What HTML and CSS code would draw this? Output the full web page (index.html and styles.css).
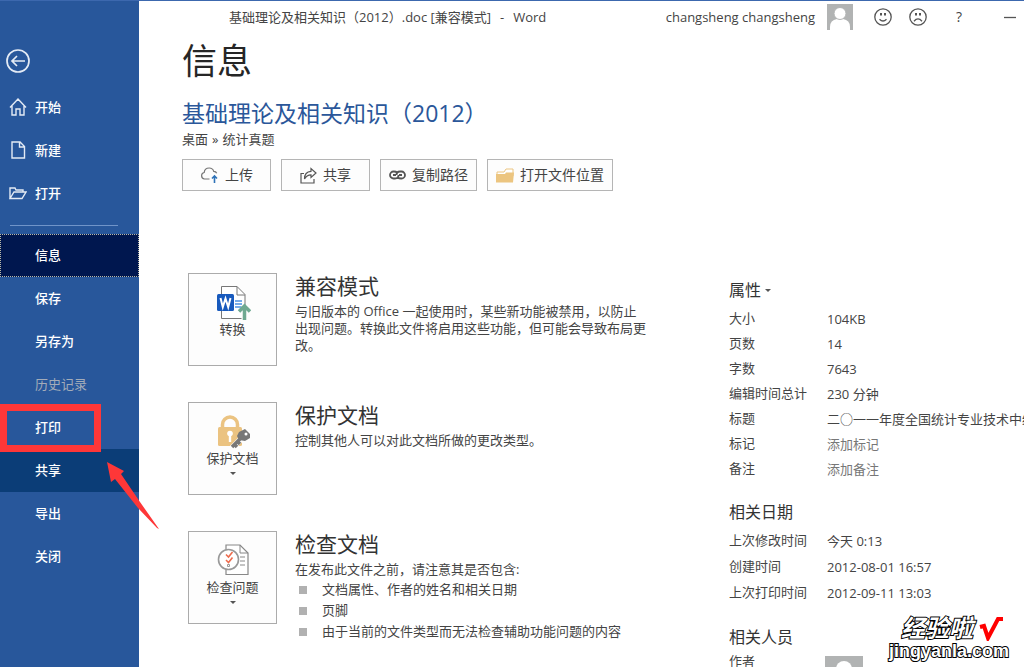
FILE: index.html
```html
<!DOCTYPE html>
<html lang="zh-CN">
<head>
<meta charset="utf-8">
<title>基础理论及相关知识（2012）.doc - Word</title>
<link rel="stylesheet" href="styles.css">
</head>
<body>
<div class="app">
  <aside class="sidebar">
    <button class="back" aria-label="返回">
      <svg width="24" height="24" viewBox="0 0 24 24"><circle cx="12" cy="12" r="11"/><path d="M19 12H6M11 7l-5 5 5 5"/></svg>
    </button>
    <nav class="nav">
      <a class="nav-item" href="#"><svg class="nav-icon" width="18" height="18" viewBox="0 0 18 18"><path d="M1 9.500 9 1l8 8.500M3 8v9h4v-6h4v6h4V8"/></svg>开始</a>
      <a class="nav-item" href="#"><svg class="nav-icon" width="18" height="18" viewBox="0 0 18 18"><path d="M3 1h8l4.500 4.500V17H3zM10.500 1v5H15.500"/></svg>新建</a>
      <a class="nav-item" href="#"><svg class="nav-icon" width="18" height="18" viewBox="0 0 18 18"><path d="M1 14.500V4h5l1 2h7v2M1 14.500 5 8h12l-4 6.500z"/></svg>打开</a>
      <hr class="divider">
      <a class="nav-item text-only current" href="#">信息</a>
      <a class="nav-item text-only" href="#">保存</a>
      <a class="nav-item text-only" href="#">另存为</a>
      <a class="nav-item text-only disabled" href="#" aria-disabled="true">历史记录</a>
      <a class="nav-item text-only marked" href="#">打印</a>
      <a class="nav-item text-only hover" href="#">共享</a>
      <a class="nav-item text-only" href="#">导出</a>
      <a class="nav-item text-only" href="#">关闭</a>
    </nav>
  </aside>

  <main class="main">
    <header class="titlebar">
      <div class="doc-name"><span>基础理论及相关知识（2012）.doc [兼容模式]</span><span>-</span><span>Word</span></div>
      <span class="user">changsheng changsheng</span>
      <svg class="avatar" width="26" height="26" viewBox="0 0 26 26"><path fill="#b1b3b3" d="M0 0h26v26H0z"/><path fill="#fff" d="M3 26v-3q0-7 7-8h6q7 1 7 8v3z"/><circle cx="13" cy="9.500" r="6" fill="#fff" stroke="#b1b3b3"/></svg>
      <button class="tool" aria-label="微笑"><svg width="18" height="18" viewBox="0 0 18 18"><circle cx="9" cy="9" r="8.200"/><path d="M5.500 11.200q3.500 3.600 7 0"/><path class="eyes" d="M7 5v2.500M11 5v2.500"/></svg></button>
      <button class="tool" aria-label="哭脸"><svg width="18" height="18" viewBox="0 0 18 18"><circle cx="9" cy="9" r="8.200"/><path d="M5 13.200q4-4.500 8 0"/><path class="eyes" d="M7 5v2.500M11 5v2.500"/></svg></button>
      <button class="tool help" aria-label="帮助">?</button>
      <button class="tool minimize" aria-label="最小化"><svg width="12" height="18" viewBox="0 0 12 18"><path d="M0 9.500h12"/></svg></button>
    </header>

    <h1 class="page-title">信息</h1>
    <h2 class="doc-title">基础理论及相关知识（2012）</h2>
    <p class="path"><span>桌面</span><span>»</span><span>统计真题</span></p>

    <div class="actions">
      <button class="action"><svg width="19" height="16" viewBox="0 0 19 16"><path fill="none" stroke="#777" stroke-width="1.200" d="M9.500 12H4.500a3.300 3.300 0 0 1-.3-6.500C4.500 2.500 7 1 9.200 1c2.300 0 3.900 1.300 4.500 3.300 1.500 0 2.600.8 3 2"/><path fill="none" stroke="#2f73b8" stroke-width="1.600" d="M14.500 16V9M12 11.500 14.500 9l2.500 2.500"/></svg>上传</button>
      <button class="action"><svg width="17" height="17" viewBox="0 0 17 17"><path fill="none" stroke="#555" stroke-width="1.200" d="M4 6.500H1V16h13v-4M4.500 12c0-4.500 2-7.500 6.500-7.700V1.500L16 6l-5 4.500V7.800c-3 0-5 1.200-6.500 4.200z"/></svg>共享</button>
      <button class="action"><svg width="17" height="10" viewBox="0 0 17 10"><path fill="none" stroke="#555" stroke-width="1.800" d="M8 2.500Q7 1.500 5 1.500H4.500a3.500 3.500 0 0 0 0 7H6c2 0 3.500-1.500 3.500-3.500M9 7.500q1 1 3 1h.5a3.500 3.500 0 0 0 0-7H11C9 1.500 7.500 3 7.500 5M4 5h3M10 5h3"/></svg>复制路径</button>
      <button class="action"><svg width="18" height="15" viewBox="0 0 18 15"><path fill="#fff" stroke="#ecc580" d="M1 13V4h7l2-3h7v7"/><path fill="#ecc580" d="M0 14.500V6h9l1-1.500h8l-1 10z"/></svg>打开文件位置</button>
    </div>

    <div class="content">
      <div class="tasks">
        <section class="task">
          <button class="card">
            <svg width="36" height="34" viewBox="0 0 36 34"><path fill="#fff" stroke="#777" d="M6.500.5H22l8 8V32.500H6.500z"/><path fill="none" stroke="#777" d="M22 .5V9h8"/><path stroke="#4b91e2" stroke-width="1.300" d="M20 15h7M20 18h7M20 21h7"/><rect x="2" y="8" width="17" height="17" rx="1.500" fill="#185abd"/><path fill="none" stroke="#fff" stroke-width="2" d="m5.500 12 2.300 9 2.700-8.500 2.700 8.500 2.300-9"/><path fill="none" stroke="#fdfdfd" stroke-width="6" d="M29.500 34V20"/><path fill="none" stroke="#6fa991" stroke-width="3.500" d="M29.500 34V21M24 25.500l5.500-5.500 5.500 5.500"/></svg>
            <span>转换</span>
          </button>
          <div class="task-body">
            <h3>兼容模式</h3>
            <p>与旧版本的 Office 一起使用时，某些新功能被禁用，以防止出现问题。转换此文件将启用这些功能，但可能会导致布局更改。</p>
          </div>
        </section>
        <section class="task">
          <button class="card">
            <svg width="36" height="34" viewBox="0 0 36 34"><path fill="none" stroke="#ebc381" stroke-width="3.500" d="M7.500 14V9.500a7.500 7.500 0 0 1 15 0V14"/><rect x="3" y="12" width="24" height="19" rx="1.500" fill="#ebc381"/><circle cx="15" cy="18.500" r="2.800" fill="#fff"/><path fill="#fff" d="M13.800 19h2.400v8h-2.400z"/><path fill="none" stroke="#fdfdfd" stroke-width="6" d="M17 33 27 23"/><path fill="none" stroke="#777" stroke-width="3.500" d="M17 32 27 22M19 29l3 3M22 26l3 3"/><path fill="#777" d="m24 17 6-3 5 5v4l-5 3-6-1-2-4z"/><circle cx="31" cy="19" r="1.500" fill="#fff"/></svg>
            <span>保护文档</span>
            <svg class="caret" width="6" height="3" viewBox="0 0 6 3"><path d="M0 0h6L3 3z"/></svg>
          </button>
          <div class="task-body">
            <h3>保护文档</h3>
            <p>控制其他人可以对此文档所做的更改类型。</p>
          </div>
        </section>
        <section class="task">
          <button class="card">
            <svg width="36" height="34" viewBox="0 0 36 34"><path fill="#fff" stroke="#888" stroke-width="1.200" d="M11 1h14l8 8v21.500H11z"/><path fill="none" stroke="#888" d="M25 1v8h8M25 13h5M25 17h5M25 21h5"/><circle cx="13.500" cy="15.500" r="10" fill="#fff" stroke="#999" stroke-width="1.600"/><path fill="none" stroke="#ed6c4d" stroke-width="1.600" d="m11 10.500 2.500 2.500 4-5M11 16l2.500 2.500 4-5"/><path fill="none" stroke="#999" d="M12.500 20.500h2v2h-2z"/></svg>
            <span>检查问题</span>
            <svg class="caret" width="6" height="3" viewBox="0 0 6 3"><path d="M0 0h6L3 3z"/></svg>
          </button>
          <div class="task-body">
            <h3>检查文档</h3>
            <p>在发布此文件之前，请注意其是否包含:</p>
            <ul>
              <li>文档属性、作者的姓名和相关日期</li>
              <li>页脚</li>
              <li>由于当前的文件类型而无法检查辅助功能问题的内容</li>
            </ul>
          </div>
        </section>
      </div>

      <div class="details">
        <h4><button class="props-menu">属性<svg class="caret" width="6" height="3" viewBox="0 0 6 3"><path d="M0 0h6L3 3z"/></svg></button></h4>
        <table class="props">
          <tr><th scope="row">大小</th><td>104KB</td></tr>
          <tr><th scope="row">页数</th><td>14</td></tr>
          <tr><th scope="row">字数</th><td>7643</td></tr>
          <tr><th scope="row">编辑时间总计</th><td>230 分钟</td></tr>
          <tr><th scope="row">标题</th><td>二○一一年度全国统计专业技术中级</td></tr>
          <tr><th scope="row">标记</th><td class="hint">添加标记</td></tr>
          <tr><th scope="row">备注</th><td class="hint">添加备注</td></tr>
        </table>
        <h4>相关日期</h4>
        <table class="props dates">
          <tr><th scope="row">上次修改时间</th><td>今天 0:13</td></tr>
          <tr><th scope="row">创建时间</th><td>2012-08-01 16:57</td></tr>
          <tr><th scope="row">上次打印时间</th><td>2012-09-11 13:03</td></tr>
        </table>
        <h4>相关人员</h4>
        <div class="author">
          <span>作者</span>
          <svg width="38" height="38" viewBox="0 0 38 38"><path fill="#b1b3b3" d="M0 0h38v38H0z"/><circle cx="19" cy="13" r="8" fill="#fff"/><path fill="#fff" d="M4 38q0-14 15-14t15 14z"/></svg>
        </div>
      </div>
    </div>
  </main>

  <svg class="arrow" width="52" height="68" viewBox="0 0 52 68"><path fill="#fe3738" d="M0 0 17 9l-3 3 19 28 19 27-2-1L31 46 8 17l-4 3z"/></svg>
  <div class="watermark">
    <div class="brand">经验啦<svg width="24" height="24" viewBox="0 0 24 24"><path fill="none" stroke="#f00" stroke-width="4" d="m1 10 4-1 4 12L19 2h5"/></svg></div>
    <div class="site">jingyanla.com</div>
  </div>
</div>
</body>
</html>
```
FILE: styles.css
```css
* { box-sizing: border-box; }

body {
  margin: 0;
  font: 13px/18px "Open Sans", "Noto Sans CJK SC", sans-serif;
  color: #444;
  background: #fff;
}

h1, h2, h3, h4, p, ul { margin: 0; padding: 0; font-weight: 400; }

button {
  font: inherit;
  color: inherit;
  background: none;
  border: 0;
  padding: 0;
}

.app {
  position: relative;
  display: flex;
  height: 100vh;
  overflow: hidden;
  border-top: 1px solid #3c68ae;
}

/* Sidebar */
.sidebar {
  flex: 0 0 139px;
  padding-top: 48px;
  background: #28579b;
  color: #fff;
}

.back { display: block; height: 24px; margin: 0 0 13px 6px; }
.back svg, .nav-icon { display: block; fill: none; stroke: #e4ebf5; stroke-width: 1.4; }
.back svg { stroke-width: 1.7; }

.nav-item {
  display: flex;
  align-items: center;
  gap: 8px;
  height: 43px;
  padding: 0 0 2px 9px;
  color: #fff;
  font-weight: 500;
  text-decoration: none;
}
.text-only { padding-left: 35px; }
.current { background: #00174f; outline: 1px dotted #b9b9a9; outline-offset: -1px; }
.hover { background: #0b3d77; }
.disabled { color: #a3acb9; font-weight: 400; }

.divider {
  height: 1px;
  margin: 10px 21px 8px 10px;
  border: 0;
  background: #7094c9;
}

.marked { position: relative; }
.marked::after {
  content: "";
  position: absolute;
  inset: -2px 38px -3px 0;
  border: 7px solid #fe3738;
  z-index: 1;
}

/* Main pane */
.main { flex: 1; min-width: 0; padding-left: 43px; }

.titlebar {
  display: flex;
  align-items: center;
  height: 32px;
  padding: 0 8px 0 47px;
}
.doc-name { display: flex; flex: 1; gap: 9px; white-space: nowrap; }
.avatar { margin: 0 21px 0 12px; }
.tool { display: flex; justify-content: center; margin-right: 17px; }
.tool svg { fill: none; stroke: #555; stroke-width: 1.3; }
.tool .eyes { stroke-width: 2; }
.help { width: 34px; margin: 0 28px 0 -2px; font-size: 14px; }
.minimize { margin-right: 0; }

.page-title { margin-top: 5px; font-size: 35px; line-height: 46px; color: #262626; }
.doc-title { margin-top: 14px; font-size: 23px; line-height: 30px; color: #2b579a; }
.path { display: flex; gap: 4px; margin-top: 2px; }

.actions { display: flex; gap: 10px; margin-top: 11px; }
.action {
  display: flex;
  align-items: center;
  justify-content: center;
  gap: 6px;
  min-width: 89px;
  height: 32px;
  padding: 0 8px;
  border: 1px solid #b5b5b5;
  background: #fdfdfd;
  font-size: 14px;
}

.content {
  display: grid;
  grid-template-columns: minmax(0, 1fr) 295px;
  margin-top: 82px;
}

.tasks { display: flex; flex-direction: column; gap: 36px; padding-left: 6px; }
.task { display: flex; gap: 18px; min-height: 93px; }
.card {
  display: flex;
  flex-direction: column;
  align-items: center;
  flex: 0 0 89px;
  height: 93px;
  padding-top: 12px;
  border: 1px solid #ababab;
  background: #fdfdfd;
}
.caret { fill: #555; }
.card .caret { margin-top: 5px; }

.task-body { max-width: 352px; }
.task-body h3 { margin-bottom: 4px; font-size: 21px; line-height: 26px; color: #333; }
.task-body p { line-height: 17px; }
.task-body ul { margin-top: 1px; list-style: none; }
.task-body li {
  display: flex;
  align-items: center;
  gap: 15px;
  padding-left: 4px;
  line-height: 21px;
  white-space: nowrap;
}
.task-body li::before { content: ""; width: 8px; height: 8px; background: #b1b1b1; }

/* Document properties */
.details { padding-top: 5px; overflow: hidden; }
.details h4 { font-size: 16px; line-height: 24px; color: #333; }
.props-menu { display: flex; align-items: center; gap: 4px; }

.props { width: max-content; margin: 3px 0 20px; border-collapse: collapse; white-space: nowrap; }
.props th, .props td { height: 25px; padding: 0; font-weight: 400; text-align: left; }
.props th { min-width: 98px; }
.props td { padding-top: 3px; }
.props .hint { color: #777; }
.dates { margin-bottom: 20px; }
.dates th, .dates td { height: 26px; }
.dates td { padding-top: 1px; }

.author { display: flex; margin-top: 3px; }
.author span { width: 96px; }
.author svg { margin-top: 4px; }

/* Overlays */
.arrow { position: absolute; left: 107px; top: 461px; }

.watermark {
  position: absolute;
  right: 15px;
  bottom: 6px;
  color: #fff;
  font-family: "Liberation Sans", "Noto Sans CJK SC", sans-serif;
  font-weight: 700;
  text-align: right;
  paint-order: stroke fill;
  -webkit-text-stroke: 2px #000;
}
.brand {
  display: flex;
  align-items: center;
  justify-content: flex-end;
  gap: 6px;
  padding-right: 6px;
  font-size: 24px;
  font-style: italic;
  line-height: 24px;
}
.site { font-size: 18px; line-height: 20px; }
```
